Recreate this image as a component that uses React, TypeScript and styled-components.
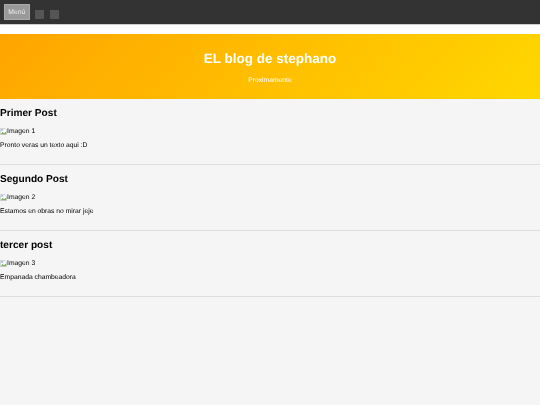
import styled, { createGlobalStyle } from "styled-components";

const posts = [
  { title: "Primer Post", alt: "Imagen 1", text: "Pronto veras un texto aqui :D" },
  { title: "Segundo Post", alt: "Imagen 2", text: "Estamos en obras no mirar jeje" },
  { title: "tercer post", alt: "Imagen 3", text: "Empanada chambeadora" },
];

export default function App() {
  return (
    <Page>
      <GlobalStyle />
      <Nav>
        <MenuButton>Menú</MenuButton>
        <NavSquare />
        <NavSquare />
      </Nav>
      <Hero>
        <HeroTitle>EL blog de stephano</HeroTitle>
        <HeroText>Proximamente</HeroText>
      </Hero>
      <main>
        {posts.map((post) => (
          <Post key={post.title}>
            <PostTitle>{post.title}</PostTitle>
            <ImageLine>
              <BrokenIcon viewBox="0 0 7 7">
                <path d="M0.4 0.4H4.8L6.6 2.2V6.6H0.4Z" fill="#fff" stroke="#b5b5b5" strokeWidth="0.6" />
                <path d="M0.8 6.2L2.6 3.8L4 5.2L6.2 3.6V6.2Z" fill="#7ab55c" />
                <rect x="1" y="1" width="2.4" height="1.8" fill="#a9c8ee" />
              </BrokenIcon>
              {post.alt}
            </ImageLine>
            <PostText>{post.text}</PostText>
          </Post>
        ))}
      </main>
    </Page>
  );
}

const GlobalStyle = createGlobalStyle`
  html, body {
    margin: 0;
    height: 100%;
    background: #f5f5f5;
  }
`;

// capa propia para que el texto salga en gris, sin subpixel
const Page = styled.div`
  font-family: "Liberation Sans", Arial, sans-serif;
  color: #000;
  text-rendering: geometricPrecision;
  will-change: transform;
`;

const Nav = styled.nav`
  display: flex;
  align-items: flex-start;
  height: 25px;
  padding: 4px 0 0 4px;
  box-sizing: border-box;
  background: #333;
  border-bottom: 1px solid #ccc;
`;

const MenuButton = styled.button`
  width: 25.5px;
  height: 16px;
  padding: 0;
  margin-right: 5.5px;
  background: #999;
  border: 1px solid #aaa;
  color: #eee;
  font-family: inherit;
  font-size: 6.75px;
  text-rendering: geometricPrecision;
`;

const NavSquare = styled.span`
  width: 9px;
  height: 9px;
  margin: 6px 6px 0 0;
  background: #555;
`;

const Hero = styled.header`
  height: 73.5px;
  display: flex;
  flex-direction: column;
  align-items: center;
  padding-top: 16px;
  box-sizing: border-box;
  border-top: 9px solid #fff;
  background: linear-gradient(135deg, #ffa500, #ffd700) padding-box;
  color: #fff;
`;

const HeroTitle = styled.h1`
  margin: 0;
  font-size: 13.5px;
  font-weight: 700;
  line-height: 18px;
`;

const HeroText = styled.p`
  margin: 8px 0 0;
  font-size: 6.75px;
  line-height: 10px;
`;

const Post = styled.article`
  height: 66px;
  box-sizing: border-box;
  border-bottom: 1px solid #ddd;
  padding-top: 8px;
`;

const PostTitle = styled.h2`
  margin: 0 0 6px;
  font-size: 10.125px;
  line-height: 14px;
`;

const ImageLine = styled.div`
  display: flex;
  align-items: center;
  height: 10px;
  font-size: 6.75px;
`;

const BrokenIcon = styled.svg`
  width: 7px;
  height: 7px;
`;

const PostText = styled.p`
  margin: 4px 0 0;
  font-size: 6.75px;
  line-height: 10px;
`;
